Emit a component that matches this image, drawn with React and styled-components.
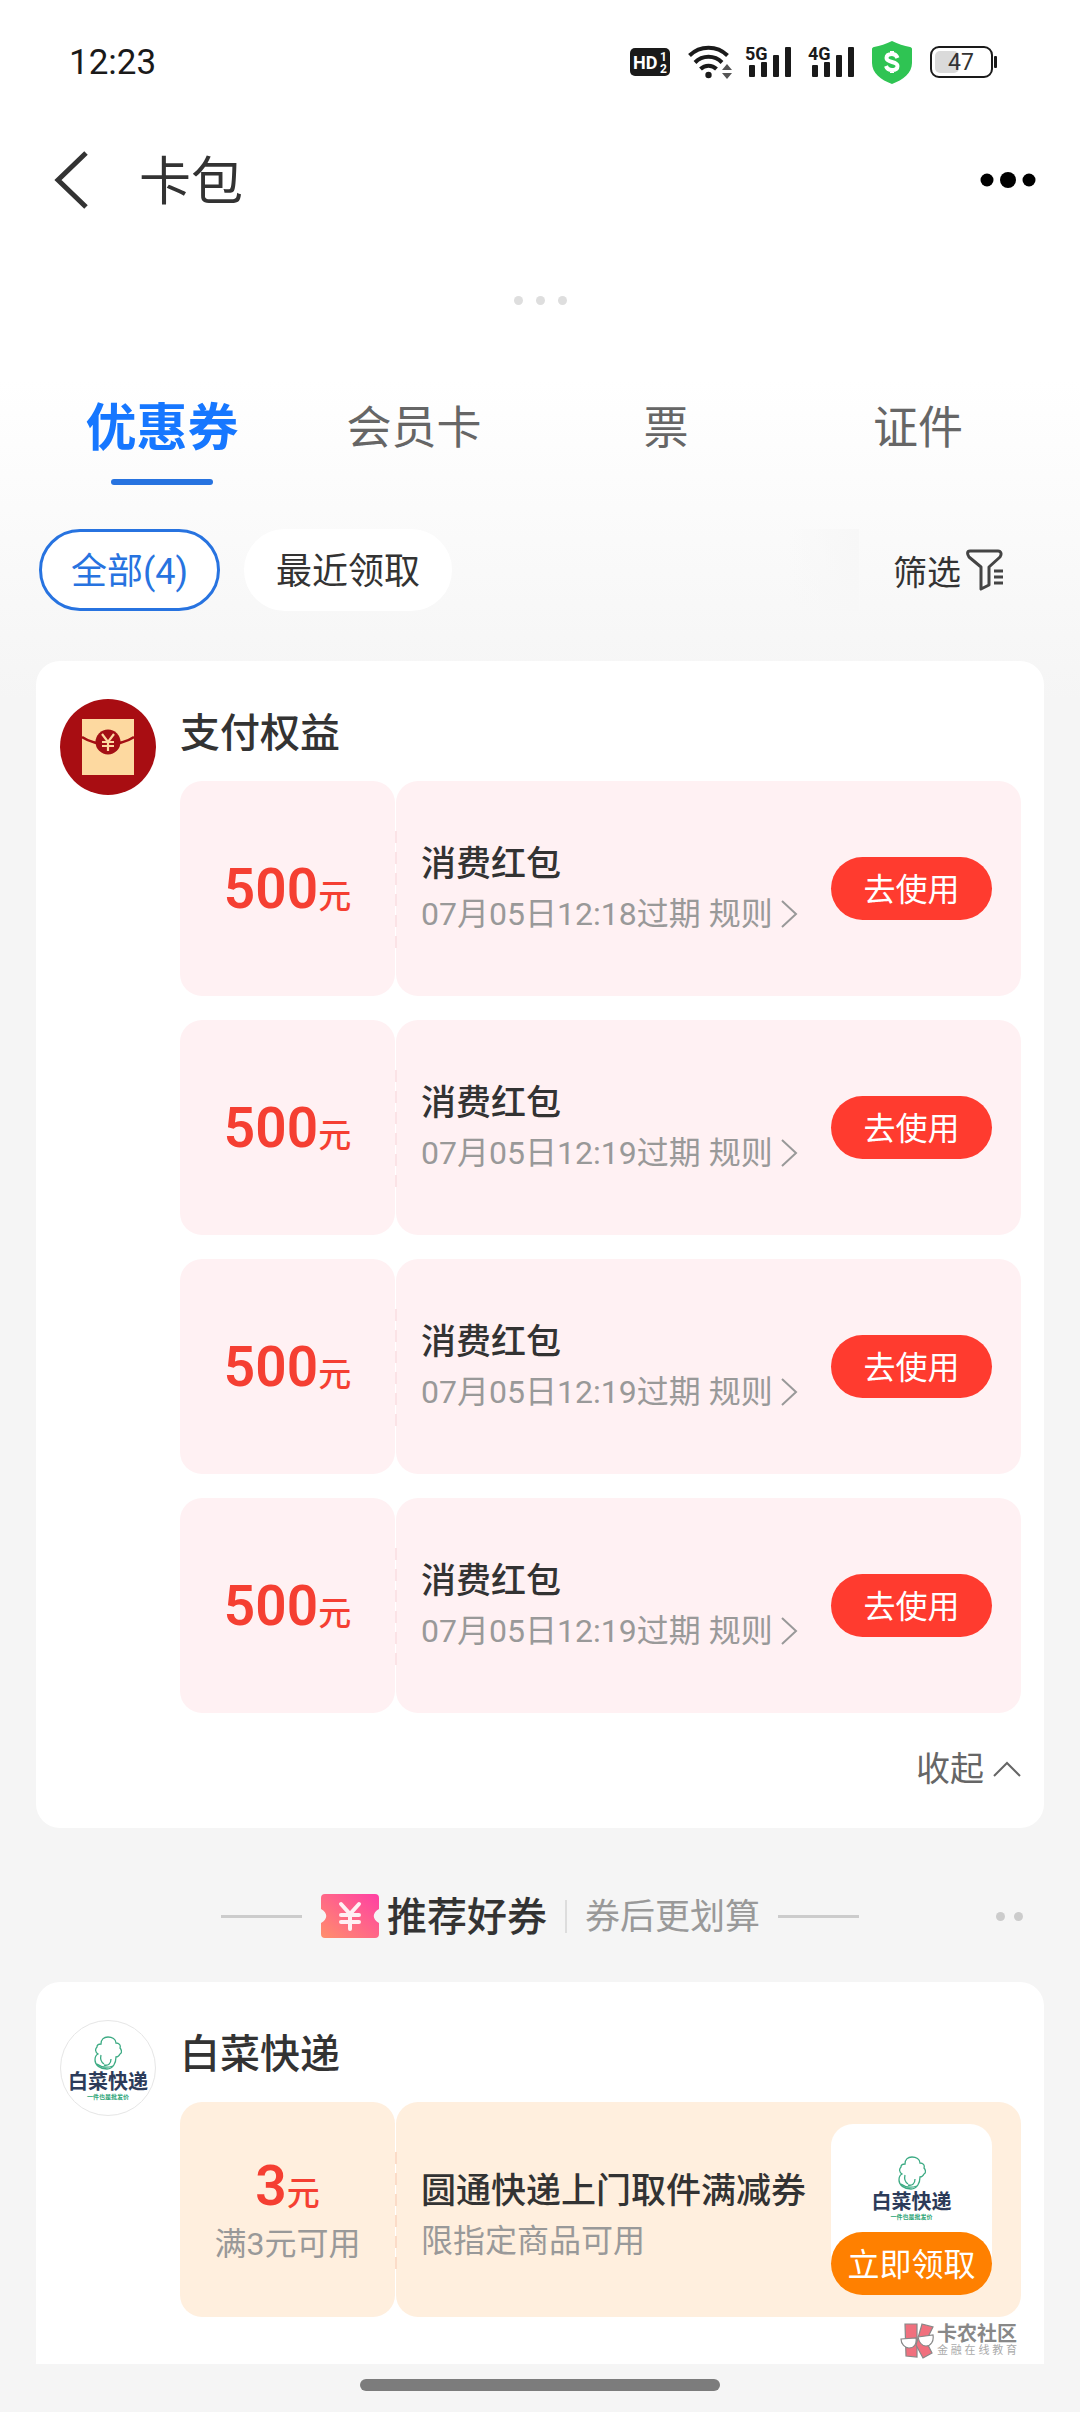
import React, { useState } from 'react'
import styled, { createGlobalStyle, css } from 'styled-components'

const colors = {
  blue: '#1677ff',
  blueLine: '#2773e0',
  red: '#ff3b2f',
  price: '#f53f32',
  orange: '#ff8000',
  pink: '#fff1f3',
  peach: '#ffefde',
  text: '#333333',
  muted: '#999999',
  page: '#f5f5f5'
}

const GlobalStyle = createGlobalStyle`
  * {
    box-sizing: border-box;
  }

  body {
    background: ${colors.page};
    color: ${colors.text};
    font-family: Roboto, 'Noto Sans CJK SC', sans-serif;
    margin: 0;
  }

  button {
    background: none;
    border: 0;
    color: inherit;
    cursor: pointer;
    font: inherit;
    padding: 0;
  }

  h1, h2, h3, p {
    font-weight: 400;
    margin: 0;
  }

  svg {
    display: block;
    flex: none;
  }
`

const Page = styled.div`
  background: linear-gradient(#ffffff 380px, ${colors.page} 700px);
  display: flex;
  flex-direction: column;
  min-height: 100vh;
`

const StatusBar = styled.div`
  align-items: center;
  color: #1a1a1a;
  display: flex;
  height: 124px;
  justify-content: space-between;
  padding: 0 83px 0 69px;
`

const Clock = styled.time`
  font-size: 35px;
`

const StatusIcons = styled.div`
  align-items: center;
  display: flex;
`

const StatusIcon = styled.svg`
  margin-left: ${props => props.$gap || 0}px;
`

const Header = styled.header`
  align-items: center;
  display: flex;
  height: 112px;
  padding: 0 44px 0 53px;
`

const HeaderTitle = styled.h1`
  flex: 1;
  font-size: 52px;
  line-height: 72px;
  padding: 6px 0 0 50px;
`

const LoadingDots = styled.div`
  align-items: center;
  display: flex;
  gap: 13px;
  height: 128px;
  justify-content: center;
`

const Dot = styled.span`
  background: ${props => props.$color || '#dedede'};
  border-radius: 50%;
  height: 9px;
  width: 9px;
`

const Tabs = styled.nav`
  display: flex;
  padding: 23px 36px 0;
`

const Tab = styled.button`
  align-items: center;
  color: #666666;
  display: flex;
  flex: 1;
  flex-direction: column;
  font-size: 45px;
  gap: 8px;
  line-height: 84px;

  &::after {
    border-radius: 3px;
    content: '';
    height: 6px;
    width: 102px;
  }

  ${props => props.$active && css`
    color: ${colors.blue};
    font-size: 51px;
    font-weight: 600;

    &::after {
      background: ${colors.blueLine};
    }
  `}
`

const Filters = styled.div`
  align-items: center;
  display: flex;
  gap: 24px;
  padding: 44px 76px 50px 39px;
`

const Chip = styled.button`
  background: #ffffff;
  border: 3px solid ${props => props.$active ? colors.blueLine : '#ffffff'};
  border-radius: 41px;
  color: ${props => props.$active ? colors.blueLine : colors.text};
  font-size: 36px;
  height: 82px;
  padding: 0 29px 5px;
`

const Fade = styled.div`
  background: linear-gradient(to right, rgba(247, 247, 247, 0), #f7f7f7);
  height: 82px;
  margin-left: auto;
  width: 72px;
`

const FilterButton = styled.button`
  align-items: center;
  display: flex;
  font-size: 34px;
  gap: 5px;
  margin-left: 10px;
`

const Card = styled.section`
  align-items: flex-start;
  background: #ffffff;
  border-radius: ${props => props.$cut ? '24px 24px 0 0' : '24px'};
  display: flex;
  margin: 0 36px;
  padding: 38px 23px 0 24px;
`

const Avatar = styled.div`
  align-items: center;
  background: ${props => props.$color || '#ffffff'};
  border-radius: 50%;
  display: flex;
  flex: none;
  height: 96px;
  justify-content: center;
  overflow: hidden;
  width: 96px;

  ${props => props.$bordered && css`
    border: 1px solid #e6e6e6;
  `}
`

const CardBody = styled.div`
  display: flex;
  flex: 1;
  flex-direction: column;
  gap: 24px;
  margin-left: 24px;
`

const CardTitle = styled.h2`
  font-size: 40px;
  font-weight: 500;
  line-height: 46px;
  padding-top: 12px;
`

const Coupon = styled.article`
  display: flex;
  gap: 1px;
  height: 215px;
  position: relative;

  & > * {
    background: ${props => props.$color};
    border-radius: 22px;
  }

  &::after {
    background: repeating-linear-gradient(${props => props.$dash} 0 12px, transparent 12px 21px);
    border-radius: 0;
    content: '';
    height: 117px;
    left: 215px;
    position: absolute;
    top: 50px;
    width: 2px;
  }
`

const Amount = styled.div`
  align-items: center;
  display: flex;
  flex: none;
  flex-direction: column;
  justify-content: center;
  width: 215px;
`

const Price = styled.p`
  align-items: baseline;
  color: ${colors.price};
  display: flex;
  font-size: 55px;
  font-weight: 600;
  line-height: 52px;
  padding-top: 8px;
`

const Unit = styled.span`
  font-size: 33px;
  font-weight: 500;
`

const Detail = styled.div`
  align-items: center;
  display: flex;
  flex: 1;
  justify-content: space-between;
  padding: 0 29px 0 25px;
`

const Info = styled.div`
  padding-top: ${props => props.$low ? 12 : 0}px;
`

const CouponTitle = styled.h3`
  font-size: 35px;
  font-weight: 500;
  line-height: 50px;
  white-space: nowrap;
`

const Note = styled.p`
  align-items: center;
  color: ${colors.muted};
  display: flex;
  font-size: 32px;
  line-height: 48px;
`

const RuleLink = styled.a`
  align-items: center;
  color: inherit;
  display: flex;
  gap: 7px;
  margin-left: 8px;
  text-decoration: none;
`

const ActionButton = styled.button`
  background: ${props => props.$color || colors.red};
  border-radius: 32px;
  color: #ffffff;
  font-size: 32px;
  height: 63px;
  padding-bottom: 3px;
  width: 161px;
`

const Product = styled.div`
  align-items: center;
  background: linear-gradient(#ffffff 140px, transparent 140px);
  border-radius: 22px 22px 0 0;
  display: flex;
  flex-direction: column;
  justify-content: space-between;
  height: 171px;
  padding-top: 32px;
`

const Collapse = styled.button`
  align-items: center;
  align-self: flex-end;
  color: #666666;
  display: flex;
  font-size: 34px;
  gap: 9px;
  line-height: 50px;
  margin: 7px 0 34px;
`

const Brand = styled.div`
  align-items: center;
  color: #2c3b59;
  display: flex;
  flex-direction: column;
`

const BrandName = styled.strong`
  font-size: 20px;
  font-weight: 700;
  line-height: 22px;
`

const BrandSlogan = styled.small`
  color: #2fa578;
  font-size: 6px;
  font-weight: 700;
  line-height: 8px;
`

const SectionTitle = styled.div`
  align-items: center;
  display: grid;
  grid-template-columns: 1fr auto 1fr;
  height: 154px;
  padding: 22px 57px 0;
`

const SectionCenter = styled.div`
  align-items: center;
  display: flex;
  grid-column: 2;
`

const Line = styled.span`
  background: #cccccc;
  height: 3px;
  width: 81px;
`

const TicketIcon = styled.svg`
  margin-left: 19px;
`

const SectionName = styled.h2`
  font-size: 40px;
  font-weight: 500;
  line-height: 50px;
  padding: 4px 18px 0 8px;
`

const Divider = styled.span`
  background: #dddddd;
  height: 33px;
  width: 2px;
`

const SectionSub = styled.p`
  color: ${colors.muted};
  font-size: 35px;
  line-height: 50px;
  padding: 4px 18px 0;
`

const MoreDots = styled.div`
  display: flex;
  gap: 9px;
  justify-content: flex-end;
`

const Watermark = styled.div`
  align-items: center;
  align-self: flex-end;
  color: #888888;
  display: flex;
  gap: 3px;
  height: 47px;
  margin: -24px 4px 0 0;
`

const WatermarkText = styled.div`
  width: 80px;
`

const WatermarkName = styled.strong`
  display: block;
  font-size: 20px;
  line-height: 20px;
`

const WatermarkSub = styled.small`
  color: #aaaaaa;
  display: block;
  font-size: 11px;
  line-height: 14px;
  text-align-last: justify;
`

const HomeBar = styled.div`
  background: #7c7c7c;
  border-radius: 6px;
  height: 12px;
  margin: 15px auto 21px;
  width: 360px;
`

const SignalIcon = ({ label, gap }) => (
  <StatusIcon $gap={gap} width='47' height='44' viewBox='0 0 47 44' fill='#1a1a1a'>
    <text x='0' y='20' fontSize='18' fontWeight='700'>{label}</text>
    <rect x='4' y='25' width='6' height='12' rx='1' />
    <rect x='16' y='22' width='6' height='15' rx='1' />
    <rect x='28' y='15' width='6' height='22' rx='1' />
    <rect x='40' y='7' width='6' height='30' rx='1' />
  </StatusIcon>
)

const CabbageIcon = () => (
  <svg width='28' height='35' viewBox='0 0 28 35' fill='none' stroke='#3dab84' strokeWidth='1.3'>
    <path d='M7 8C7 3 10 1 14 1s8 2 8 6c3 0 5 2 4 5 2 2 2 5 0 6-1 2-3 3-4 3 0 6-3 12-9 12-7 0-12-4-12-9 0-3 1-5 3-6-3-2-3-5-1-7 0-2 2-3 4-3z' />
    <path d='M7 19c-1 4 0 7 3 9M10 29c4 1 7-1 7-6M3 28c5 4 10 4 16 2' />
  </svg>
)

const BrandLogo = () => (
  <Brand>
    <CabbageIcon />
    <BrandName>白菜快递</BrandName>
    <BrandSlogan>一件也是批发价</BrandSlogan>
  </Brand>
)

const EnvelopeIcon = () => (
  <svg width='52' height='56' viewBox='0 0 52 56'>
    <rect width='52' height='56' fill='#fdd9a0' />
    <path d='M0 18c9 6 17 7 26 7s17-1 26-7' fill='none' stroke='#a30f14' strokeWidth='2.5' />
    <circle cx='26' cy='23' r='12.5' fill='#a30f14' />
    <path d='M20 15l6 8 6-8M26 23v9M20 23h12M20 27h12' fill='none' stroke='#fdd9a0' strokeWidth='2.2' />
  </svg>
)

const coupons = [
  { id: 1, expires: '07月05日12:18过期' },
  { id: 2, expires: '07月05日12:19过期' },
  { id: 3, expires: '07月05日12:19过期' },
  { id: 4, expires: '07月05日12:19过期' }
]

const tabs = ['优惠券', '会员卡', '票', '证件']
const chips = ['全部(4)', '最近领取']

const PhoneStatus = () => (
  <StatusBar>
    <Clock>12:23</Clock>
    <StatusIcons>
      <StatusIcon width='40' height='28' viewBox='0 0 40 28'>
        <rect width='40' height='28' rx='5' fill='#1a1a1a' />
        <g fill='#fff' fontWeight='700'>
          <text x='3' y='21' fontSize='18'>HD</text>
          <text x='30' y='13' fontSize='12'>1</text>
          <text x='30' y='25' fontSize='12'>2</text>
        </g>
      </StatusIcon>
      <StatusIcon $gap={18} width='45' height='36' viewBox='0 0 45 36'>
        <g fill='none' stroke='#1a1a1a' strokeWidth='4'>
          <path d='M1.5 11.5a27 27 0 0 1 38 0' />
          <path d='M7 18.5a19 19 0 0 1 27 0' />
          <path d='M12.5 25a11.5 11.5 0 0 1 16 0' />
        </g>
        <circle cx='20.5' cy='31' r='3.2' fill='#1a1a1a' />
        <path d='M34 26l5-6 5 6zM34 29h10l-5 6z' fill='#555' />
      </StatusIcon>
      <SignalIcon label='5G' gap={12} />
      <SignalIcon label='4G' gap={16} />
      <StatusIcon $gap={17} width='40' height='43' viewBox='0 0 40 43'>
        <path d='M20 0c6 3 12 5 18 6 1 0 2 1 2 2v14c0 10-9 17-20 21C9 39 0 32 0 22V8c0-1 1-2 2-2C8 5 14 3 20 0z' fill='#2fc453' />
        <path d='M25.5 17c-1-3-3-4-5.500-4-3 0-5.500 1-5.500 4 0 5 11 3 11 8 0 3-2.500 4-5.500 4s-5-1-6-4M20 10v3M20 29v3' fill='none' stroke='#fff' strokeWidth='4' />
      </StatusIcon>
      <StatusIcon $gap={18} width='67' height='32' viewBox='0 0 67 32'>
        <rect x='5' y='5' width='24' height='22' rx='5' fill='#dadada' />
        <rect x='1' y='1' width='61' height='30' rx='8' fill='none' stroke='#1a1a1a' strokeWidth='2' />
        <rect x='64' y='10' width='3' height='12' rx='1' fill='#1a1a1a' />
        <text x='31' y='24' fontSize='23' textAnchor='middle' fill='#333'>47</text>
      </StatusIcon>
    </StatusIcons>
  </StatusBar>
)

const PayCoupon = ({ expires }) => (
  <Coupon $color={colors.pink} $dash='#fbe3e6'>
    <Amount>
      <Price>500<Unit>元</Unit></Price>
    </Amount>
    <Detail>
      <Info>
        <CouponTitle>消费红包</CouponTitle>
        <Note>
          {expires}
          <RuleLink href='#rules'>
            规则
            <svg width='18' height='28' viewBox='0 0 18 28' fill='none' stroke='#999' strokeWidth='2'>
              <path d='M2 1l14 13L2 27' />
            </svg>
          </RuleLink>
        </Note>
      </Info>
      <ActionButton>去使用</ActionButton>
    </Detail>
  </Coupon>
)

const App = () => {
  const [tab, setTab] = useState(tabs[0])
  const [chip, setChip] = useState(chips[0])

  return (
    <Page>
      <GlobalStyle />
      <PhoneStatus />
      <Header>
        <button aria-label='返回'>
          <svg width='36' height='58' viewBox='0 0 36 58' fill='none' stroke='#333' strokeWidth='5'>
            <path d='M33 2L5 29l28 27' />
          </svg>
        </button>
        <HeaderTitle>卡包</HeaderTitle>
        <button aria-label='更多'>
          <svg width='56' height='16' viewBox='0 0 56 16'>
            <circle cx='7' cy='8' r='6.5' />
            <circle cx='28' cy='8' r='8' />
            <circle cx='49' cy='8' r='6.5' />
          </svg>
        </button>
      </Header>
      <LoadingDots>
        <Dot />
        <Dot />
        <Dot />
      </LoadingDots>
      <Tabs>
        {tabs.map(name => (
          <Tab key={name} $active={name === tab} onClick={() => setTab(name)}>{name}</Tab>
        ))}
      </Tabs>
      <Filters>
        {chips.map(name => (
          <Chip key={name} $active={name === chip} onClick={() => setChip(name)}>{name}</Chip>
        ))}
        <Fade />
        <FilterButton>
          筛选
          <svg width='38' height='42' viewBox='0 0 38 42' fill='none' stroke='#444' strokeWidth='3' strokeLinejoin='round'>
            <path d='M4 2h28c3 0 4 3 2 6L23 18v18l-8 4V18L3 8C1 5 1 2 4 2z' />
            <path d='M28 22h9M28 28h9M28 34h9' />
          </svg>
        </FilterButton>
      </Filters>
      <Card>
        <Avatar $color='#a80d12'>
          <EnvelopeIcon />
        </Avatar>
        <CardBody>
          <CardTitle>支付权益</CardTitle>
          {coupons.map(coupon => <PayCoupon key={coupon.id} expires={coupon.expires} />)}
          <Collapse>
            收起
            <svg width='28' height='16' viewBox='0 0 28 16' fill='none' stroke='#666' strokeWidth='2'>
              <path d='M1 15L14 2l13 13' />
            </svg>
          </Collapse>
        </CardBody>
      </Card>
      <SectionTitle>
        <SectionCenter>
          <Line />
          <TicketIcon width='58' height='44' viewBox='0 0 58 44'>
            <defs>
              <linearGradient id='ticket' x1='0' y1='1' x2='1' y2='0'>
                <stop offset='0' stopColor='#ff8f6b' />
                <stop offset='1' stopColor='#ff3fa4' />
              </linearGradient>
            </defs>
            <path d='M4 0h50q4 0 4 4v11c-7 4-7 10 0 14v11q0 4-4 4H4q-4 0-4-4V29c7-4 7-10 0-14V4q0-4 4-4z' fill='url(#ticket)' />
            <path d='M20 10l9 10 9-10M29 20v15M20 21h18M20 28h18' fill='none' stroke='#fff0f4' strokeWidth='4' strokeLinecap='round' />
          </TicketIcon>
          <SectionName>推荐好券</SectionName>
          <Divider />
          <SectionSub>券后更划算</SectionSub>
          <Line />
        </SectionCenter>
        <MoreDots>
          <Dot $color='#cccccc' />
          <Dot $color='#cccccc' />
        </MoreDots>
      </SectionTitle>
      <Card $cut>
        <Avatar $bordered>
          <BrandLogo />
        </Avatar>
        <CardBody>
          <CardTitle>白菜快递</CardTitle>
          <Coupon $color={colors.peach} $dash='#fbdcc8'>
            <Amount>
              <Price>3<Unit>元</Unit></Price>
              <Note>满3元可用</Note>
            </Amount>
            <Detail>
              <Info $low>
                <CouponTitle>圆通快递上门取件满减券</CouponTitle>
                <Note>限指定商品可用</Note>
              </Info>
              <Product>
                <BrandLogo />
                <ActionButton $color={colors.orange}>立即领取</ActionButton>
              </Product>
            </Detail>
          </Coupon>
          <Watermark>
            <svg width='34' height='36' viewBox='0 0 34 36' stroke='#888' strokeWidth='1.2'>
              <path d='M5 1h12v33l-11-1z' fill='#f0707e' />
              <path d='M22 1l11 3-7 14 6 12-9 5-7-13z' fill='#f0707e' />
              <path d='M1 16l15-1c1 6-2 10-7 10-4 0-8-4-8-9zM18 14l15-2c1 6-2 11-7 11-4 0-7-4-8-9z' fill='#fff' />
            </svg>
            <WatermarkText>
              <WatermarkName>卡农社区</WatermarkName>
              <WatermarkSub>金融在线教育</WatermarkSub>
            </WatermarkText>
          </Watermark>
        </CardBody>
      </Card>
      <HomeBar />
    </Page>
  )
}

export default App
